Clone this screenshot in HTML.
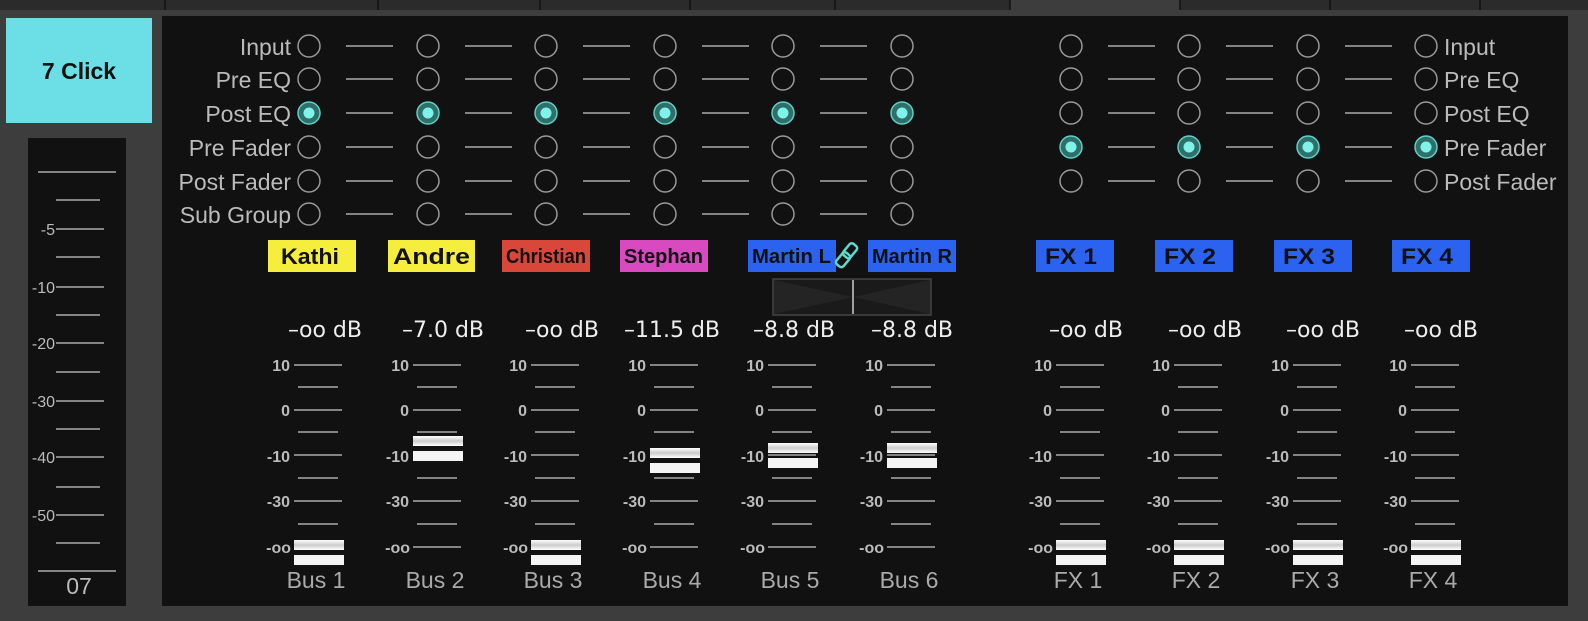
<!DOCTYPE html>
<html><head><meta charset="utf-8"><style>
body{margin:0;background:#3d3d3d;width:1588px;height:616px;overflow:hidden;font-family:"Liberation Sans",sans-serif}
</style></head><body>
<svg width="1588" height="616" xmlns="http://www.w3.org/2000/svg" font-family="Liberation Sans, sans-serif">
<defs>
<g id="sc" stroke="#aaa" stroke-width="1.5">
<line x1="-15" x2="33" y1="365" y2="365"/><line x1="-11" x2="29" y1="387" y2="387"/>
<line x1="-15" x2="33" y1="410" y2="410"/><line x1="-11" x2="29" y1="432" y2="432"/>
<line x1="-15" x2="33" y1="455" y2="455"/><line x1="-11" x2="29" y1="478" y2="478"/>
<line x1="-15" x2="33" y1="501" y2="501"/><line x1="-11" x2="29" y1="524" y2="524"/>
<line x1="-15" x2="33" y1="547" y2="547"/>
</g>
<linearGradient id="cg" x1="0" y1="0" x2="0" y2="1"><stop offset="0" stop-color="#fff"/><stop offset="0.5" stop-color="#ccc"/><stop offset="1" stop-color="#fff"/></linearGradient>
<g id="cap"><rect x="-15" y="-13" width="50" height="10" fill="url(#cg)"/><rect x="-15" y="2" width="50" height="10" fill="#f4f4f4"/></g>
<g id="o"><circle r="11" fill="none" stroke="#999" stroke-width="1.5"/></g>
<g id="on"><circle r="11" fill="#2f6f6a" stroke="#5fd0c5" stroke-width="1.5"/><circle r="5.5" fill="#7ff3ea"/></g>
<g id="ln"><line x1="37" x2="84" y1="0" y2="0" stroke="#aaa" stroke-width="1.5"/></g>
<g id="bcol"><use href="#o" y="46"/><use href="#o" y="79"/><use href="#on" y="113"/><use href="#o" y="147"/><use href="#o" y="181"/><use href="#o" y="214"/></g>
<g id="blines"><use href="#ln" y="46"/><use href="#ln" y="79"/><use href="#ln" y="113"/><use href="#ln" y="147"/><use href="#ln" y="181"/><use href="#ln" y="214"/></g>
<g id="fcol"><use href="#o" y="46"/><use href="#o" y="79"/><use href="#o" y="113"/><use href="#on" y="147"/><use href="#o" y="181"/></g>
<g id="flines"><use href="#ln" y="46"/><use href="#ln" y="79"/><use href="#ln" y="113"/><use href="#ln" y="147"/><use href="#ln" y="181"/></g>
</defs>
<rect x="0" y="0" width="1588" height="10" fill="#2b2b2b"/>
<rect x="1010" y="0" width="170" height="12" fill="#3d3d3d"/>
<g stroke="#111" stroke-width="1.5">
<line x1="165" x2="165" y1="0" y2="10"/><line x1="378" x2="378" y1="0" y2="10"/><line x1="540" x2="540" y1="0" y2="10"/><line x1="690" x2="690" y1="0" y2="10"/><line x1="835" x2="835" y1="0" y2="10"/><line x1="1010" x2="1010" y1="0" y2="10"/><line x1="1180" x2="1180" y1="0" y2="10"/><line x1="1330" x2="1330" y1="0" y2="10"/><line x1="1480" x2="1480" y1="0" y2="10"/></g>
<rect x="6" y="18" width="146" height="105" fill="#6cdfe6"/>
<text x="79" y="79" text-anchor="middle" font-size="23" font-weight="bold" fill="#111">7 Click</text>
<rect x="28" y="138" width="98" height="468" fill="#111"/>
<g stroke="#aaa" stroke-width="1.5">
<line x1="38" x2="116" y1="172" y2="172"/><line x1="56" x2="100" y1="200" y2="200"/>
<line x1="56" x2="104" y1="229" y2="229"/><line x1="56" x2="100" y1="257" y2="257"/>
<line x1="56" x2="104" y1="287" y2="287"/><line x1="56" x2="100" y1="315" y2="315"/>
<line x1="56" x2="104" y1="343" y2="343"/><line x1="56" x2="100" y1="372" y2="372"/>
<line x1="56" x2="104" y1="401" y2="401"/><line x1="56" x2="100" y1="429" y2="429"/>
<line x1="56" x2="104" y1="457" y2="457"/><line x1="56" x2="100" y1="487" y2="487"/>
<line x1="56" x2="104" y1="515" y2="515"/><line x1="56" x2="100" y1="543" y2="543"/>
<line x1="38" x2="116" y1="571" y2="571"/></g>
<g fill="#bbb" font-size="16" text-anchor="end">
<text x="55" y="235">-5</text><text x="55" y="293">-10</text><text x="55" y="349">-20</text><text x="55" y="407">-30</text><text x="55" y="463">-40</text><text x="55" y="521">-50</text></g>
<text x="79" y="594" text-anchor="middle" font-size="23" fill="#bbb">07</text>
<rect x="162" y="16" width="1406" height="590" fill="#111"/>
<g fill="#bbb" font-size="23" text-anchor="end">
<text x="291" y="55">Input</text><text x="291" y="88">Pre EQ</text><text x="291" y="122">Post EQ</text><text x="291" y="156">Pre Fader</text><text x="291" y="190">Post Fader</text><text x="291" y="223">Sub Group</text></g>
<g fill="#bbb" font-size="23">
<text x="1444" y="55">Input</text><text x="1444" y="88">Pre EQ</text><text x="1444" y="122">Post EQ</text><text x="1444" y="156">Pre Fader</text><text x="1444" y="190">Post Fader</text></g>
<use href="#bcol" x="309"/><use href="#bcol" x="428"/><use href="#bcol" x="546"/><use href="#bcol" x="665"/><use href="#bcol" x="783"/><use href="#bcol" x="902"/>
<use href="#blines" x="309"/><use href="#blines" x="428"/><use href="#blines" x="546"/><use href="#blines" x="665"/><use href="#blines" x="783"/>
<use href="#fcol" x="1071"/><use href="#fcol" x="1189"/><use href="#fcol" x="1308"/><use href="#fcol" x="1426"/>
<use href="#flines" x="1071"/><use href="#flines" x="1189"/><use href="#flines" x="1308"/>
<g font-weight="bold" fill="#111">
<rect x="268" y="240" width="88" height="32" fill="#f6ee3c"/><text x="281" y="264" font-size="22" textLength="58" lengthAdjust="spacingAndGlyphs">Kathi</text>
<rect x="388" y="240" width="87" height="32" fill="#f6ee3c"/><text x="393" y="264" font-size="22" textLength="77" lengthAdjust="spacingAndGlyphs">Andre</text>
<rect x="502" y="240" width="88" height="32" fill="#d9463a"/><text x="506" y="263" font-size="20" textLength="80" lengthAdjust="spacingAndGlyphs">Christian</text>
<rect x="620" y="240" width="88" height="32" fill="#d94ac0"/><text x="624" y="263" font-size="20" textLength="79" lengthAdjust="spacingAndGlyphs">Stephan</text>
<rect x="748" y="240" width="88" height="32" fill="#2b62f0"/><text x="752" y="263" font-size="20" textLength="79" lengthAdjust="spacingAndGlyphs">Martin L</text>
<rect x="868" y="240" width="88" height="32" fill="#2b62f0"/><text x="872" y="263" font-size="20" textLength="80" lengthAdjust="spacingAndGlyphs">Martin R</text>
<rect x="1036" y="240" width="78" height="32" fill="#2b62f0"/><text x="1045" y="264" font-size="22" textLength="52" lengthAdjust="spacingAndGlyphs">FX 1</text>
<rect x="1155" y="240" width="78" height="32" fill="#2b62f0"/><text x="1164" y="264" font-size="22" textLength="52" lengthAdjust="spacingAndGlyphs">FX 2</text>
<rect x="1274" y="240" width="78" height="32" fill="#2b62f0"/><text x="1283" y="264" font-size="22" textLength="52" lengthAdjust="spacingAndGlyphs">FX 3</text>
<rect x="1392" y="240" width="78" height="32" fill="#2b62f0"/><text x="1401" y="264" font-size="22" textLength="52" lengthAdjust="spacingAndGlyphs">FX 4</text>
</g>
<g fill="none" stroke="#5fd8cc" stroke-width="2.5">
<rect x="839" y="252" width="9" height="15" rx="3" transform="rotate(40 843 259)"/>
<rect x="846" y="243" width="9" height="15" rx="3" transform="rotate(40 850 250)"/></g>
<rect x="773" y="279" width="158" height="36" fill="#1a1a1a" stroke="#444" stroke-width="1.5"/>
<polygon points="774,280 853,297 774,314" fill="#242424"/><polygon points="930,280 853,297 930,314" fill="#242424"/>
<line x1="853" x2="853" y1="280" y2="314" stroke="#ccc" stroke-width="1.5"/>
<g fill="#eee" font-size="22" font-family="DejaVu Sans, sans-serif" text-anchor="middle">
<text x="325" y="337">–oo dB</text><text x="443" y="337">–7.0 dB</text><text x="562" y="337">–oo dB</text><text x="672" y="337">–11.5 dB</text><text x="794" y="337">–8.8 dB</text><text x="912" y="337">–8.8 dB</text>
<text x="1086" y="337">–oo dB</text><text x="1205" y="337">–oo dB</text><text x="1323" y="337">–oo dB</text><text x="1441" y="337">–oo dB</text></g>
<use href="#sc" x="309"/><use href="#sc" x="428"/><use href="#sc" x="546"/><use href="#sc" x="665"/><use href="#sc" x="783"/><use href="#sc" x="902"/>
<use href="#sc" x="1071"/><use href="#sc" x="1189"/><use href="#sc" x="1308"/><use href="#sc" x="1426"/>
<g fill="#bbb" font-size="16" font-weight="bold" text-anchor="end">
<text x="290" y="371">10</text><text x="290" y="416">0</text><text x="290" y="462">-10</text><text x="290" y="507">-30</text><text x="291" y="553">-oo</text>
<text x="409" y="371">10</text><text x="409" y="416">0</text><text x="409" y="462">-10</text><text x="409" y="507">-30</text><text x="410" y="553">-oo</text>
<text x="527" y="371">10</text><text x="527" y="416">0</text><text x="527" y="462">-10</text><text x="527" y="507">-30</text><text x="528" y="553">-oo</text>
<text x="646" y="371">10</text><text x="646" y="416">0</text><text x="646" y="462">-10</text><text x="646" y="507">-30</text><text x="647" y="553">-oo</text>
<text x="764" y="371">10</text><text x="764" y="416">0</text><text x="764" y="462">-10</text><text x="764" y="507">-30</text><text x="765" y="553">-oo</text>
<text x="883" y="371">10</text><text x="883" y="416">0</text><text x="883" y="462">-10</text><text x="883" y="507">-30</text><text x="884" y="553">-oo</text>
<text x="1052" y="371">10</text><text x="1052" y="416">0</text><text x="1052" y="462">-10</text><text x="1052" y="507">-30</text><text x="1053" y="553">-oo</text>
<text x="1170" y="371">10</text><text x="1170" y="416">0</text><text x="1170" y="462">-10</text><text x="1170" y="507">-30</text><text x="1171" y="553">-oo</text>
<text x="1289" y="371">10</text><text x="1289" y="416">0</text><text x="1289" y="462">-10</text><text x="1289" y="507">-30</text><text x="1290" y="553">-oo</text>
<text x="1407" y="371">10</text><text x="1407" y="416">0</text><text x="1407" y="462">-10</text><text x="1407" y="507">-30</text><text x="1408" y="553">-oo</text></g>
<use href="#cap" x="309" y="553"/><use href="#cap" x="428" y="449"/><use href="#cap" x="546" y="553"/><use href="#cap" x="665" y="461"/><use href="#cap" x="783" y="456"/><use href="#cap" x="902" y="456"/>
<use href="#cap" x="1071" y="553"/><use href="#cap" x="1189" y="553"/><use href="#cap" x="1308" y="553"/><use href="#cap" x="1426" y="553"/>
<g fill="#aaa" font-size="23" text-anchor="middle">
<text x="316" y="588">Bus 1</text><text x="435" y="588">Bus 2</text><text x="553" y="588">Bus 3</text><text x="672" y="588">Bus 4</text><text x="790" y="588">Bus 5</text><text x="909" y="588">Bus 6</text>
<text x="1078" y="588">FX 1</text><text x="1196" y="588">FX 2</text><text x="1315" y="588">FX 3</text><text x="1433" y="588">FX 4</text></g>
</svg>
</body></html>
